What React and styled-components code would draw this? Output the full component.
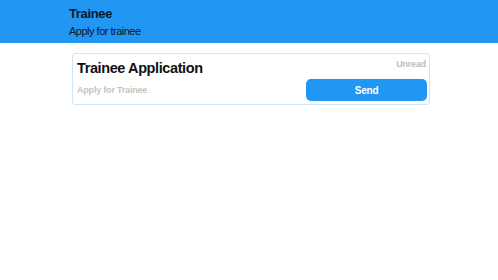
import styled, { createGlobalStyle } from "styled-components";

const GlobalStyle = createGlobalStyle`
    html, body {
        margin: 0;
        padding: 0;
        background: #ffffff;
        font-family: "Liberation Sans", Arial, sans-serif;
    }
`;

const Header = styled.header`
    background-color: #2196f3;
    height: 43px;
    box-sizing: border-box;
    padding: 6px 0 0;
`;

const Container = styled.div`
    width: 364px;
    margin: 0 auto;
    box-sizing: border-box;
    padding: 0 1px 0 ${(p) => p.$inset || 2}px;
`;

const HeaderTitle = styled.h1`
    margin: 0;
    font-size: 13px;
    letter-spacing: -0.35px;
    font-weight: 700;
    color: #0b1a2a;
    line-height: 16px;
`;

const HeaderSub = styled.p`
    margin: 2px 0 0;
    font-size: 11px;
    letter-spacing: -0.5px;
    color: #0b1a2a;
    line-height: 14px;
`;

const Main = styled.main`
    padding-top: 10px;
`;

const Card = styled.div`
    border: 1px solid #cfe6f8;
    border-radius: 3px;
    padding: 4px 2px 3px 4px;
    display: flex;
    flex-direction: column;
`;

const TopRow = styled.div`
    display: flex;
    justify-content: space-between;
    align-items: flex-start;
`;

const Title = styled.h2`
    margin: 0;
    font-size: 14.5px;
    letter-spacing: -0.4px;
    font-weight: 700;
    color: #111111;
    line-height: 20px;
`;

const Status = styled.span`
    font-size: 9px;
    letter-spacing: -0.2px;
    font-weight: 700;
    color: #bdbdbd;
    line-height: 12px;
    margin-right: 1px;
`;

const BottomRow = styled.div`
    display: flex;
    justify-content: space-between;
    align-items: center;
    margin-top: 1px;
`;

const Desc = styled.span`
    font-size: 9px;
    letter-spacing: -0.2px;
    font-weight: 700;
    color: #c4c4c4;
`;

const SendButton = styled.button`
    width: 121px;
    height: 22px;
    padding: 0;
    border: none;
    border-radius: 5px;
    background-color: #2196f3;
    color: #ffffff;
    font-family: inherit;
    font-size: 10px;
    letter-spacing: -0.2px;
    font-weight: 700;
    cursor: pointer;
`;

export default function App() {
    return (
        <>
            <GlobalStyle />
            <Header>
                <Container>
                    <HeaderTitle>Trainee</HeaderTitle>
                    <HeaderSub>Apply for trainee</HeaderSub>
                </Container>
            </Header>
            <Main>
                <Container $inset={5}>
                    <Card>
                        <TopRow>
                            <Title>Trainee Application</Title>
                            <Status>Unread</Status>
                        </TopRow>
                        <BottomRow>
                            <Desc>Apply for Trainee</Desc>
                            <SendButton>Send</SendButton>
                        </BottomRow>
                    </Card>
                </Container>
            </Main>
        </>
    );
}
